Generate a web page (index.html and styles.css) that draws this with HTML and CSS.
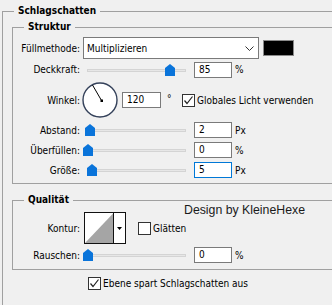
FILE: index.html
```html
<!DOCTYPE html>
<html lang="de">
<head>
<meta charset="utf-8">
<title>Schlagschatten</title>
<link rel="stylesheet" href="styles.css">
</head>
<body>
<div class="dialog">
  <fieldset class="group outer">
    <legend>Schlagschatten</legend>

    <fieldset class="group inner struktur">
      <legend>Struktur</legend>

      <div class="row r-mode">
        <span class="lbl">Füllmethode:</span>
        <div class="select">
          <span>Multiplizieren</span>
          <svg class="chev" width="9" height="5" viewBox="0 0 9 5"><polyline points="0.5,0.5 4.5,4.5 8.5,0.5" fill="none" stroke="#333" stroke-width="1"/></svg>
        </div>
        <div class="swatch"></div>
      </div>

      <div class="row r-std">
        <span class="lbl">Deckkraft:</span>
        <div class="slider"><div class="track"></div><svg class="thumb" style="left:82px" width="10" height="12" viewBox="0 0 10 12"><polygon points="5,0 10,4 10,12 0,12 0,4" fill="#0a74da"/></svg></div>
        <div class="input">85</div><span class="unit">%</span>
      </div>

      <div class="row r-angle">
        <span class="lbl">Winkel:</span>
        <svg class="dial" width="38" height="38" viewBox="0 0 38 38">
          <circle cx="18" cy="19" r="17" fill="#fff" stroke="#34415a" stroke-width="1.4"/>
          <line x1="19.5" y1="19.5" x2="10.5" y2="4" stroke="#000" stroke-width="1"/>
          <rect x="18.5" y="18.5" width="2.5" height="2.5" fill="#000"/>
        </svg>
        <div class="input w39">120</div><span class="deg">°</span>
        <span class="check on"><svg width="11" height="11" viewBox="0 0 11 11"><polyline points="1.5,5.5 4,8.5 9.5,1.5" fill="none" stroke="#222" stroke-width="1.2"/></svg></span>
        <span class="ctext">Globales Licht verwenden</span>
      </div>

      <div class="row r-std20">
        <span class="lbl">Abstand:</span>
        <div class="slider"><div class="track"></div><svg class="thumb" style="left:2px" width="10" height="12" viewBox="0 0 10 12"><polygon points="5,0 10,4 10,12 0,12 0,4" fill="#0a74da"/></svg></div>
        <div class="input">2</div><span class="unit">Px</span>
      </div>

      <div class="row r-std20">
        <span class="lbl">Überfüllen:</span>
        <div class="slider"><div class="track"></div><svg class="thumb" style="left:0px" width="10" height="12" viewBox="0 0 10 12"><polygon points="5,0 10,4 10,12 0,12 0,4" fill="#0a74da"/></svg></div>
        <div class="input">0</div><span class="unit">%</span>
      </div>

      <div class="row r-std20">
        <span class="lbl">Größe:</span>
        <div class="slider"><div class="track"></div><svg class="thumb" style="left:4px" width="10" height="12" viewBox="0 0 10 12"><polygon points="5,0 10,4 10,12 0,12 0,4" fill="#0a74da"/></svg></div>
        <div class="input focus">5</div><span class="unit">Px</span>
      </div>
    </fieldset>

    <fieldset class="group inner qual">
      <legend>Qualität</legend>

      <div class="row r-contour">
        <span class="lbl">Kontur:</span>
        <svg class="contour" width="42" height="32" viewBox="0 0 42 32">
          <rect x="0.5" y="0.5" width="41" height="31" fill="#fff" stroke="#111"/>
          <polygon points="1,31 29.5,1 29.5,31" fill="#a5a5a5"/>
          <line x1="29.5" y1="0" x2="29.5" y2="32" stroke="#111"/>
          <polygon points="33,15 38,15 35.5,18" fill="#000"/>
        </svg>
        <span class="check off"></span>
        <span class="ctext">Glätten</span>
      </div>

      <div class="row r-std20">
        <span class="lbl">Rauschen:</span>
        <div class="slider"><div class="track"></div><svg class="thumb" style="left:0px" width="10" height="12" viewBox="0 0 10 12"><polygon points="5,0 10,4 10,12 0,12 0,4" fill="#0a74da"/></svg></div>
        <div class="input">0</div><span class="unit">%</span>
      </div>
    </fieldset>

    <div class="row r-knock">
      <span class="check on"><svg width="11" height="11" viewBox="0 0 11 11"><polyline points="1.5,5.5 4,8.5 9.5,1.5" fill="none" stroke="#222" stroke-width="1.2"/></svg></span>
      <span class="ctext">Ebene spart Schlagschatten aus</span>
    </div>
  </fieldset>

  <div class="watermark">Design by KleineHexe</div>
</div>
</body>
</html>
```

FILE: styles.css
```css
html, body {
  margin: 0;
  padding: 0;
  background: #f0f0f0;
  overflow: hidden;
}

body {
  width: 332px;
  height: 305px;
  font-family: "DejaVu Sans Condensed", "DejaVu Sans", sans-serif;
  font-stretch: condensed;
  font-size: 10px;
  color: #000;
}

.dialog {
  position: relative;
  box-sizing: border-box;
  width: 332px;
  height: 305px;
  overflow: hidden;
  padding: 4px 0 0 2px;
}

fieldset {
  margin: 0;
  padding: 0;
  min-width: 0;
  border: 1px solid #a0a0a0;
}

legend {
  font-weight: bold;
  line-height: 14px;
  padding: 0 4px;
  margin-left: 11px;
}

.outer {
  width: 360px;
  padding-bottom: 40px;
}

.inner {
  width: 340px;
  margin-left: 9px;
}

.struktur {
  margin-top: 2px;
  padding-bottom: 3px;
}

.qual {
  margin-top: 9px;
  padding-bottom: 4px;
}

.row {
  display: flex;
  align-items: center;
}

.lbl {
  flex: none;
  width: 67px;
  margin-right: 3px;
  text-align: right;
  white-space: nowrap;
}

.r-mode {
  height: 22px;
  margin-top: 3px;
}

.r-std {
  height: 21px;
}

.r-std20 {
  height: 20px;
}

.r-angle {
  height: 40px;
}

.r-contour {
  height: 34px;
  margin-top: 4px;
}

.r-knock {
  height: 16px;
  margin-top: 5px;
  padding-left: 85px;
}

.select {
  box-sizing: border-box;
  width: 176px;
  height: 22px;
  background: #fff;
  border: 1px solid #7a7a7a;
  display: flex;
  align-items: center;
  justify-content: space-between;
  padding: 1px 4px 0 3px;
}

.chev {
  display: block;
}

.swatch {
  box-sizing: border-box;
  width: 31px;
  height: 16px;
  margin-left: 4px;
  background: #000;
  border: 1px solid #8a8a8a;
}

.slider {
  position: relative;
  flex: none;
  width: 107px;
  height: 14px;
}

.track {
  box-sizing: border-box;
  margin: 6px 4px 0 4px;
  height: 3px;
  background: #e7e7e7;
  border: 1px solid #d4d4d4;
}

.thumb {
  position: absolute;
  top: 1px;
  display: block;
}

.input {
  box-sizing: border-box;
  flex: none;
  width: 38px;
  height: 16px;
  margin-left: 4px;
  padding-left: 4px;
  background: #fff;
  border: 1px solid #7a7a7a;
  line-height: 14px;
}

.input.w39 {
  width: 39px;
  margin-left: 2px;
}

.input.focus {
  border-color: #0078d7;
}

.unit {
  margin-left: 3px;
}

.dial {
  display: block;
  flex: none;
  margin-left: -1px;
}

.deg {
  width: 15px;
  padding-left: 6px;
  margin-top: -4px;
}

.check {
  box-sizing: border-box;
  flex: none;
  width: 13px;
  height: 13px;
  background: #fff;
  border: 1px solid #333;
  display: flex;
  align-items: center;
  justify-content: center;
}

.check svg {
  display: block;
}

.ctext {
  margin-left: 2px;
  white-space: nowrap;
}

.contour {
  display: block;
  flex: none;
  margin-left: 1px;
}

.r-contour .check {
  margin-left: 12px;
}

.watermark {
  position: absolute;
  left: 184px;
  top: 202px;
  line-height: 16px;
  font-family: "Liberation Sans", Arial, sans-serif;
  font-stretch: normal;
  font-size: 12.3px;
  color: #1a1a1a;
  white-space: nowrap;
}
```
